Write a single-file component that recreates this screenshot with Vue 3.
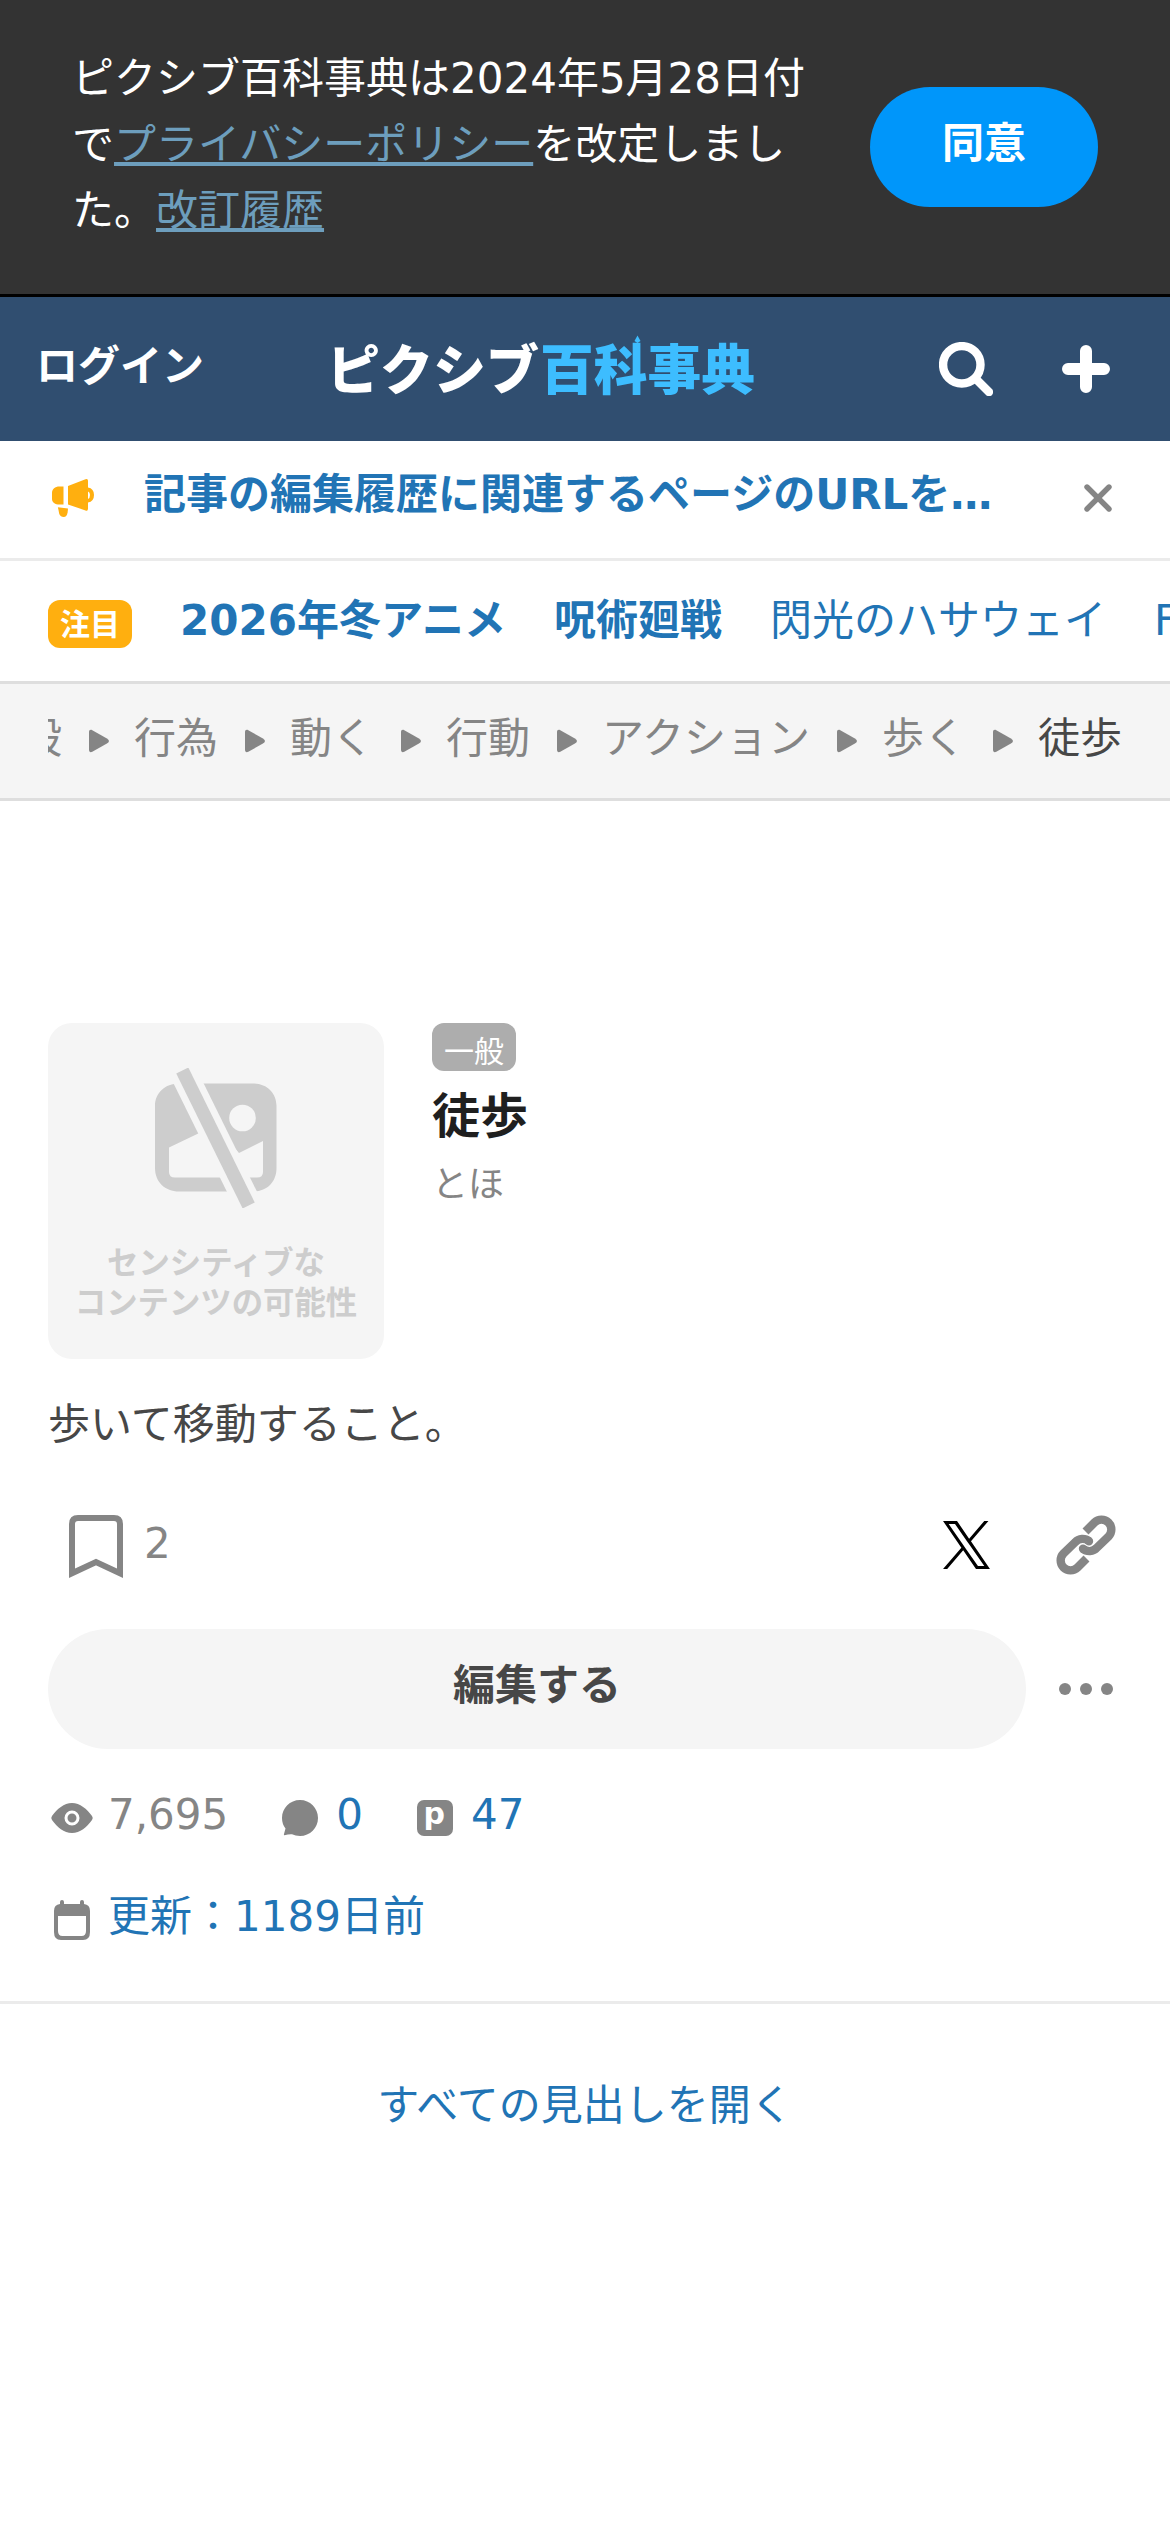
<script setup>
const featured = [
  { label: '2026年冬アニメ', strong: true },
  { label: '呪術廻戦', strong: true },
  { label: '閃光のハサウェイ', strong: false },
  { label: 'F', strong: false },
]
const crumbs = ['一般', '行為', '動く', '行動', 'アクション', '歩く', '徒歩']
</script>

<template>
  <div class="page">
    <section class="consent">
      <p class="consent-text">ピクシブ百科事典は2024年5月28日付で<a>プライバシーポリシー</a>を改定しました。<a>改訂履歴</a></p>
      <button class="agree"><span>同意</span></button>
    </section>

    <header class="header">
      <a class="login">ログイン</a>
      <svg class="logo" viewBox="0 0 432 96">
        <text class="logo-white" x="0" y="69" textLength="212" lengthAdjust="spacingAndGlyphs">ピクシブ</text>
        <text class="logo-blue" x="213" y="69" textLength="215" lengthAdjust="spacingAndGlyphs">百科事典</text>
        <path d="M310.500 14.500 313.500 20 310.500 22 307.500 20z" fill="#3dbdff" />
      </svg>
      <div class="header-icons">
        <svg width="54" height="54" viewBox="0 0 54 54" fill="none" stroke="#fff">
          <circle cx="22.8" cy="22.8" r="18.7" stroke-width="8.4" />
          <path d="M36.5 36.5 50 50" stroke-width="8.4" stroke-linecap="round" />
        </svg>
        <svg width="48" height="48" viewBox="0 0 48 48" stroke="#fff" stroke-width="12" stroke-linecap="round">
          <path d="M24 6v36M6 24h36" />
        </svg>
      </div>
    </header>

    <section class="notice">
      <svg class="horn" width="48" height="48" viewBox="0 0 48 48" fill="#ffaf0f">
        <path d="M15.500 12.400v18.200h-4C7 30.600 4 28.500 4 25v-6C4 14.800 7 12.400 11.500 12.400z" />
        <path d="M20 12 37.500 5.200Q40 4.300 40 6.800V13.500Q46 14.500 46 21T40 28.500V34.500Q40 37.500 37.500 36.400L20 30.600zM40 17.500v7.500q2-1 2-4T40 17.500z" fill-rule="evenodd" />
        <path d="M9.900 33.200 20 34.400 19.600 38.500Q18.800 43 15.600 43 12.500 43 11.300 40z" />
      </svg>
      <a class="notice-text">記事の編集履歴に関連するページのURLを…</a>
      <svg width="30" height="30" viewBox="0 0 30 30" stroke="#858585" stroke-width="5.400" stroke-linecap="round">
        <path d="m4 4 22 22M26 4 4 26" />
      </svg>
    </section>

    <nav class="featured">
      <span class="badge">注目</span>
      <a v-for="f in featured" :key="f.label" :class="{ strong: f.strong }">{{ f.label }}</a>
    </nav>

    <nav class="crumbs">
      <div class="crumb-track">
        <template v-for="(c, i) in crumbs" :key="c">
          <svg v-if="i" width="24" height="24" viewBox="-3 0 24 24" fill="#858585">
            <path d="M0 3.200C0 1 1.500.3 3.300 1.300L17.500 9.200Q22.500 12 17.500 14.800L3.300 22.700C1.500 23.700 0 23 0 20.800z" />
          </svg>
          <span :class="{ current: i === crumbs.length - 1 }">{{ c }}</span>
        </template>
      </div>
    </nav>

    <main class="article">
      <div class="summary">
        <div class="thumb">
          <svg width="122" height="140" viewBox="0 0 122 140">
            <path fill="#cdcdcd" fill-rule="evenodd" d="M24 15.500H98C112 15.500 121.500 25 121.500 38V100C121.500 114 112 123.500 98 123.500H24C10 123.500 0 114 0 100V38C0 25 10 15.500 24 15.500zM14 79.500V104Q14 109.500 20 109.500H102Q108 109.500 108 104V73L84 85 60 57.500z" />
            <circle cx="87.500" cy="50" r="13.300" fill="#f5f5f5" />
            <path d="M27 2 94 138" stroke="#f5f5f5" stroke-width="27" />
            <path d="M27.300 2.500 93.700 137.500" stroke="#cdcdcd" stroke-width="13.500" />
          </svg>
          <p>センシティブな<br />コンテンツの可能性</p>
        </div>
        <div class="heading">
          <span class="category">一般</span>
          <h1>徒歩</h1>
          <p class="reading">とほ</p>
        </div>
      </div>

      <p class="description">歩いて移動すること。</p>

      <div class="actions">
        <svg width="54" height="63" viewBox="0 0 54 63" fill="none" stroke="#858585" stroke-width="6">
          <path d="M3 58.200V9Q3 3 9 3H45Q51 3 51 9V58.200L27 47z" />
        </svg>
        <span class="count">2</span>
        <svg class="x-mark" width="47" height="48" viewBox="0 0 1200 1227">
          <path d="M714.163 519.284 1160.890 0H1055.030L667.137 450.887 357.328 0H0L468.492 681.821 0 1226.370H105.866L515.491 750.218 842.672 1226.370H1200L714.137 519.284zM569.165 687.828 521.697 619.934 144.011 79.694H306.615L611.412 515.685 658.880 583.579 1055.080 1150.300H892.476L569.165 687.854z" />
        </svg>
        <svg class="chain" width="60" height="60" viewBox="0 0 60 60" fill="none" stroke="#858585" stroke-width="8.400">
          <path d="M29.500 16.500 38.500 7.500A9.900 9.900 0 0 1 52.500 21.500L40.800 32.800A9.900 9.900 0 0 1 27 33.800" />
          <path d="M30.500 43.500 21.500 52.500A9.900 9.900 0 0 1 7.500 38.500L19.200 27.200A9.900 9.900 0 0 1 33 26.200" />
          <path d="M27 33.800v.01M33 26.200v.01" stroke-linecap="round" />
        </svg>
      </div>

      <div class="edit-row">
        <button class="edit"><span>編集する</span></button>
        <svg width="54" height="12" viewBox="0 0 54 12" fill="#858585">
          <circle cx="6" cy="6" r="6" /><circle cx="27" cy="6" r="6" /><circle cx="48" cy="6" r="6" />
        </svg>
      </div>

      <div class="stats">
        <div class="stat">
          <svg width="48" height="48" viewBox="0 0 48 48">
            <path fill="#858585" d="M24 9C32 9 39 15 44 22Q45.500 24 44 26C39 33 32 39 24 39S9 33 4 26Q2.500 24 4 22C9 15 16 9 24 9z" />
            <circle cx="24" cy="24" r="6" fill="none" stroke="#fff" stroke-width="3" />
          </svg>
          <span>7,695</span>
        </div>
        <div class="stat link">
          <svg width="48" height="48" viewBox="0 0 48 48" fill="#858585">
            <path d="M24 6C34 6 42 14 42 24S34 42 24 42Q19.500 42 16 40.200 12.500 40 8.500 41.200 7.500 41.200 8 40L9.500 34.500Q6 30 6 24C6 14 14 6 24 6z" />
          </svg>
          <span>0</span>
        </div>
        <div class="stat link">
          <svg width="48" height="48" viewBox="0 0 48 48">
            <rect x="6" y="6" width="36" height="36" rx="7" fill="#858585" />
            <text class="p-mark" x="12.500" y="30">p</text>
          </svg>
          <span>47</span>
        </div>
      </div>

      <div class="stat link updated">
        <svg width="48" height="48" viewBox="0 0 48 48" fill="#858585">
          <path fill-rule="evenodd" d="M14 4Q16 4 16 6V8H32V6Q32 4 34 4T36 6V8Q42 8.500 42 15V36Q42 44 35 44H13Q6 44 6 36V15Q6 8.500 12 8V6Q12 4 14 4zM10 20V35Q10 40 14.500 40H33.500Q38 40 38 35V20z" />
        </svg>
        <span>更新：1189日前</span>
      </div>
    </main>

    <a class="open-all">すべての見出しを開く</a>
  </div>
</template>

<style>
body {
  background: #fff;
}
</style>

<style scoped>
.page {
  width: 1170px;
  min-height: 2532px;
  overflow: hidden;
  font: 42px/66px "DejaVu Sans", "Noto Sans CJK JP", sans-serif;
  color: #474747;
}
.page * {
  box-sizing: border-box;
}
p,
h1 {
  margin: 0;
}
svg {
  display: block;
  flex: none;
}
button {
  border: 0;
  padding: 0 0 6px;
  font: inherit;
  font-weight: bold;
  height: 120px;
  border-radius: 60px;
}
.consent {
  display: flex;
  align-items: center;
  gap: 48px;
  height: 297px;
  padding: 0 72px;
  background: #333;
  border-bottom: 3px solid #000;
}
.consent-text {
  flex: 1;
  color: #fff;
  padding-bottom: 4px;
}
.consent-text a {
  color: #6d9ebd;
  text-decoration: underline;
}
.agree {
  width: 228px;
  background: #0096fa;
  color: #fff;
}
.header {
  display: flex;
  align-items: center;
  height: 144px;
  padding: 0 60px 0 36px;
  background: #304e70;
}
.login {
  width: 291px;
  color: #fff;
  font-weight: bold;
  padding-bottom: 5px;
}
.logo {
  width: 432px;
  height: 96px;
}
.logo text {
  font: 900 54px "Noto Sans CJK JP", sans-serif;
}
.logo-white {
  fill: #fff;
}
.logo-blue {
  fill: #3dbdff;
}
.header-icons {
  display: flex;
  align-items: center;
  gap: 69px;
  margin-left: auto;
}
.notice {
  display: flex;
  align-items: center;
  height: 120px;
  padding: 0 57px 3px 48px;
  border-bottom: 3px solid #ebebeb;
}
.notice-text {
  flex: 1;
  margin-left: 48px;
  padding-bottom: 6px;
  color: #2174b5;
  font-weight: bold;
  white-space: nowrap;
}
.featured {
  display: flex;
  align-items: center;
  gap: 48px;
  height: 123px;
  padding-left: 48px;
  border-bottom: 3px solid #dedede;
  color: #2174b5;
  white-space: nowrap;
}
.strong {
  font-weight: bold;
}
.badge {
  flex: none;
  width: 84px;
  height: 48px;
  margin-top: 6px;
  padding-top: 1px;
  border-radius: 12px;
  background: #ffaf0f;
  color: #fff;
  font-size: 30px;
  font-weight: bold;
  line-height: 48px;
  text-align: center;
}
.crumbs {
  height: 117px;
  padding: 0 48px;
  background: #f5f5f5;
  border-bottom: 3px solid #dedede;
  color: #858585;
}
.crumb-track {
  display: flex;
  align-items: center;
  justify-content: flex-end;
  gap: 24px;
  height: 114px;
  overflow: hidden;
  white-space: nowrap;
}
.crumb-track span {
  padding-bottom: 4px;
}
.crumb-track .current {
  color: #474747;
}
.article {
  height: 1203px;
  padding: 222px 48px 0;
  border-bottom: 3px solid #ebebeb;
}
.summary {
  display: flex;
  gap: 48px;
}
.thumb {
  display: flex;
  flex-direction: column;
  align-items: center;
  width: 336px;
  height: 336px;
  padding-top: 45px;
  border-radius: 24px;
  background: #f5f5f5;
}
.thumb p {
  margin-top: 35px;
  color: #cdcdcd;
  font-size: 31.4px;
  font-weight: bold;
  line-height: 40px;
  text-align: center;
  white-space: nowrap;
}
.category {
  display: block;
  width: 84px;
  height: 48px;
  padding-top: 5px;
  border-radius: 12px;
  background: #adadad;
  color: #fff;
  font-size: 30px;
  line-height: 48px;
  text-align: center;
}
h1 {
  margin-top: 9px;
  color: #1f1f1f;
  font-size: 48px;
  line-height: 72px;
}
.reading {
  margin-top: 3px;
  color: #858585;
  font-size: 36px;
  line-height: 60px;
}
.description {
  margin-top: 33px;
}
.actions {
  display: flex;
  align-items: center;
  height: 63px;
  margin: 57px 6px 0 21px;
}
.count {
  margin-left: 21px;
  padding-bottom: 6px;
  color: #858585;
}
.x-mark {
  margin: 0 0 3px auto;
}
.chain {
  margin: 0 0 3px 66px;
}
.edit-row {
  display: flex;
  align-items: center;
  gap: 33px;
  margin-top: 51px;
}
.edit {
  width: 978px;
  background: #f5f5f5;
  color: #474747;
}
.stats {
  display: flex;
  gap: 48px;
  margin-top: 33px;
}
.stat {
  display: flex;
  align-items: center;
  gap: 12px;
  color: #858585;
}
.stat span {
  padding-bottom: 6px;
}
.link {
  color: #2174b5;
}
.p-mark {
  font: bold 30px "DejaVu Sans", sans-serif;
  fill: #fff;
}
.updated {
  margin-top: 30px;
}
.open-all {
  display: block;
  margin-top: 69px;
  color: #2174b5;
  text-align: center;
}
</style>
